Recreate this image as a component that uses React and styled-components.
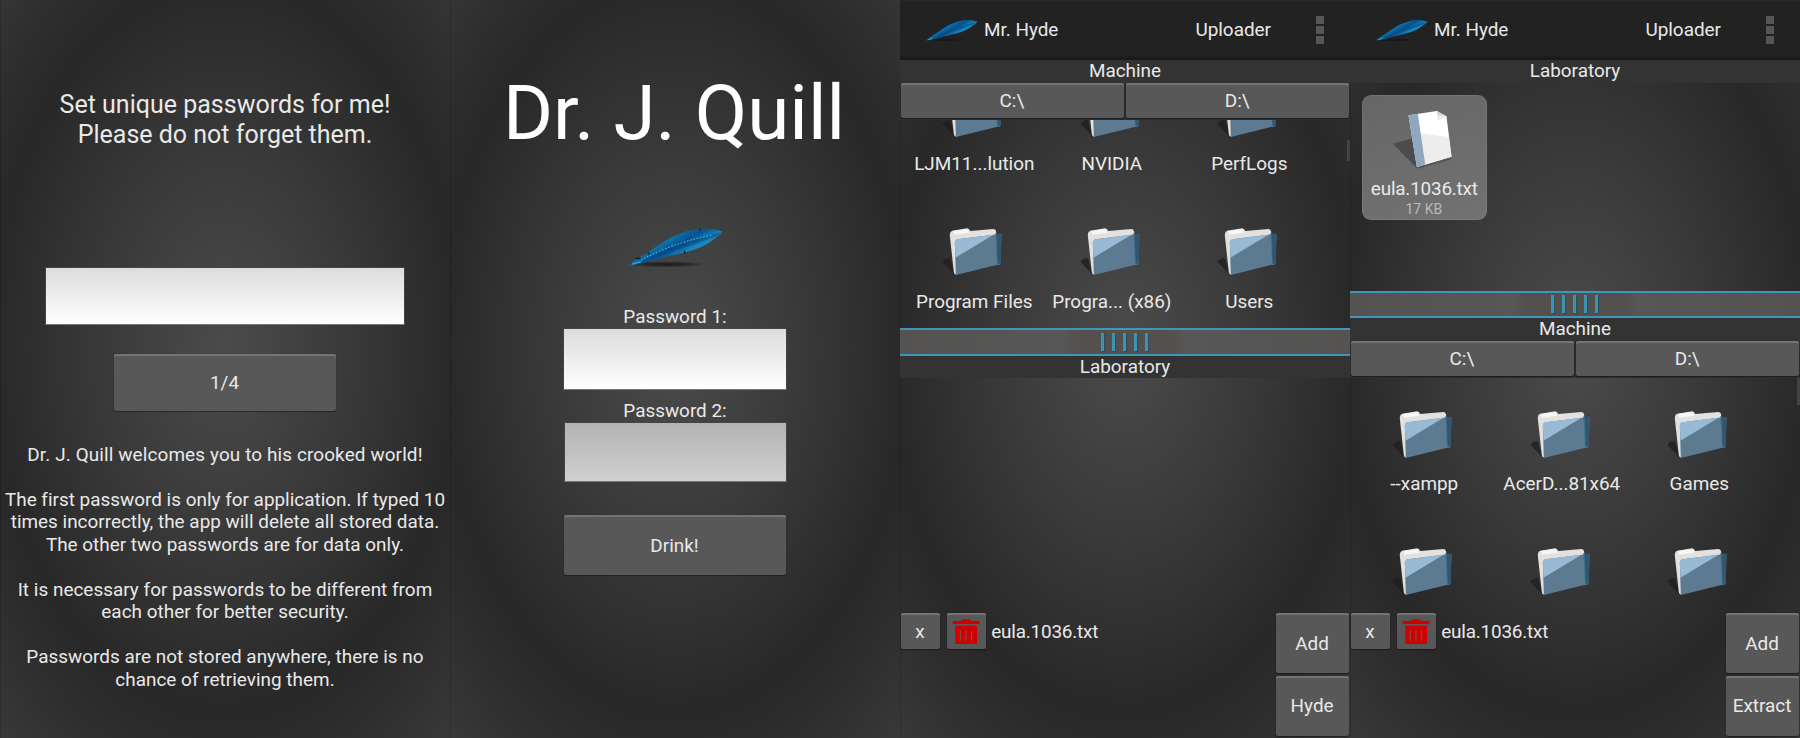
import React from "react";
import styled, { createGlobalStyle } from "styled-components";

const GlobalStyle = createGlobalStyle`
  *, *::before, *::after { box-sizing: border-box; }
  body { margin: 0; background: #2c2c2c; }
`;

const Board = styled.main`
  display: grid;
  grid-template-columns: repeat(4, 450px);
  width: 1800px;
  height: 738px;
  overflow: hidden;
  font-family: Roboto, sans-serif;
  font-size: 18.9px;
  line-height: 22.5px;
  color: #e9e9e9;
`;

const Screen = styled.section`
  display: flex;
  flex-direction: column;
  align-items: ${(p) => (p.$centered ? "center" : "stretch")};
  width: 450px;
  height: 738px;
  overflow: hidden;
  background: radial-gradient(ellipse 410px 640px at 50% 346px,
    #4b4b4b 0%, #3c3c3c 26%, #323232 42%, #282828 57%, #2d2d2d 66%, #383838 82%, #3c3c3c 100%);
  box-shadow: inset 1px 0 0 rgba(0, 0, 0, 0.14);
`;

const Heading = styled.h1`
  margin: 90px 0 0;
  font-weight: 400;
  font-size: 25px;
  line-height: 30px;
  letter-spacing: 0;
  text-align: center;
`;

const AppTitle = styled.h1`
  margin: 67px 2px 0 0;
  font-weight: 400;
  font-size: 76.4px;
  line-height: 92px;
  color: #fff;
`;

const Field = styled.input`
  width: ${(p) => p.$w}px;
  height: ${(p) => p.$h}px;
  margin-top: ${(p) => p.$mt}px;
  padding: 0 8px;
  border: 1px solid #444;
  border-bottom-color: #777;
  outline: none;
  font: inherit;
  background: ${(p) => (p.$dim ? "linear-gradient(#b3b3b3, #d0d0d0)" : "linear-gradient(#dcdcdc, #fff)")};
`;

const Button = styled.button`
  display: flex;
  align-items: center;
  justify-content: center;
  flex: none;
  width: ${(p) => p.$w}px;
  height: ${(p) => p.$h}px;
  margin-top: ${(p) => p.$mt || 0}px;
  padding: 2px 1px 0 0;
  border: 0;
  border-radius: 2px;
  background: #585858;
  box-shadow: inset 0 2px 0 #747474, 0 1px 1px rgba(0, 0, 0, 0.35), 0 0 1px rgba(0, 0, 0, 0.3);
  color: inherit;
  font: inherit;
`;

const Notes = styled.div`
  margin-top: 32.5px;
  text-align: center;
  white-space: nowrap;
`;

const Note = styled.p`
  margin: 0 0 22.5px;
  letter-spacing: ${(p) => p.$track || 0.03}px;
`;

const Label = styled.label`
  display: block;
  margin-top: ${(p) => p.$mt}px;
`;

const HeaderBar = styled.header`
  display: flex;
  align-items: center;
  flex: none;
  height: 60px;
  padding: 0 26px 0 25px;
  background: linear-gradient(#2a2a2a, #222 2px, #222 54px, #181818 60px);
`;

const AppName = styled.span`
  margin-left: 6px;
`;

const HeaderAction = styled.span`
  margin-left: auto;
`;

const Overflow = styled.span`
  display: grid;
  gap: 2px;
  margin-left: 45px;
  i { width: 8px; height: 8px; background: #565656; }
`;

const SectionTitle = styled.h2`
  flex: none;
  margin: 0;
  height: 22.5px;
  font: inherit;
  text-align: center;
  background: #333;
`;

const Drives = styled.div`
  display: flex;
  flex: none;
  gap: 2.5px;
  height: ${(p) => p.$h}px;
  padding: 0 1px;
  background: #2e2e2e;
`;

const Pane = styled.div`
  position: relative;
  flex: none;
  height: ${(p) => p.$h}px;
  overflow: hidden;
`;

const Grid = styled.div`
  display: grid;
  grid-template-columns: repeat(3, 125px);
  gap: 12.5px;
  margin: ${(p) => p.$mt}px 0 0 12.3px;
`;

const Thumb = styled.div`
  position: absolute;
  right: 0;
  top: ${(p) => p.$top}px;
  width: 3px;
  height: ${(p) => p.$h}px;
  background: #434343;
`;

const Tile = styled.figure`
  display: flex;
  flex-direction: column;
  align-items: center;
  margin: 0;
  width: 125px;
  height: 125px;
  border-radius: 9px;
  white-space: nowrap;
  background: ${(p) => (p.$selected ? "linear-gradient(160deg, #666, #727272)" : "none")};
  box-shadow: ${(p) => (p.$selected ? "inset 0 0 0 1px rgba(255,255,255,.07)" : "none")};
  svg { flex: none; }
`;

const TileName = styled.figcaption`
  margin: 2.8px 1px 0 0;
  letter-spacing: ${(p) => p.$track || 0}px;
`;

const FileSize = styled.small`
  margin: 0 2px 0 0;
  font-size: 14px;
  line-height: 18px;
  color: #b9b9b9;
`;

const Splitter = styled.div`
  display: flex;
  align-items: center;
  justify-content: center;
  gap: 8px;
  flex: none;
  height: 27.5px;
  padding-right: 2px;
  border: solid #4096b6;
  border-width: 2.5px 0;
  background: linear-gradient(90deg, #545352, #575757 36%, #53504e 40%, #53504e 60%, #575757 64%, #545352);
  i {
    width: 3px;
    height: 18px;
    background: #3c94b4;
    box-shadow: 1px 1px 1px #2b4e5c;
  }
`;

const BottomBar = styled.footer`
  display: flex;
  align-items: flex-start;
  flex: none;
  padding: 0 1px;
`;

const TrashSlot = styled.div`
  margin: 0 5.5px 0 7.5px;
`;

const PickedFile = styled.span`
  padding-top: 8px;
  letter-spacing: -0.2px;
`;

const Actions = styled.div`
  display: grid;
  gap: 2.5px;
  margin-left: auto;
`;

function Feather({ id, width, height, detail, mt = 0 }) {
  return (
    <svg width={width} height={height} viewBox="50 36 292 122" preserveAspectRatio="none" style={{ marginTop: mt, flex: "none" }} aria-hidden="true">
      <defs>
        <linearGradient id={id} x1="170" y1="65" x2="205" y2="125" gradientUnits="userSpaceOnUse">
          <stop offset="0" stopColor="#0f82b6" />
          <stop offset="0.42" stopColor="#07599a" />
          <stop offset="0.55" stopColor="#05508c" />
          <stop offset="1" stopColor="#1688c0" />
        </linearGradient>
        <radialGradient id={id + "s"}>
          <stop offset="0" stopColor="#111" stopOpacity="0.8" />
          <stop offset="0.7" stopColor="#151515" stopOpacity="0.45" />
          <stop offset="1" stopColor="#1a1a1a" stopOpacity="0" />
        </radialGradient>
      </defs>
      <ellipse cx="168" cy="147" rx="118" ry="9" fill={`url(#${id}s)`} />
      <path d="M54 151 L76 134 C100 122 122 104 150 87 C178 68 214 50 262 42 C290 39 318 42 338 50 C332 60 322 64 314 70 C288 92 256 104 215 114 C180 122 134 132 94 144 L70 148Z" fill={`url(#${id})`} />
      <path d="M92 136 C160 104 230 76 338 50 L320 64 C240 90 170 116 92 139Z" fill="#034377" opacity="0.5" />
      <path d="M66 146 L92 139" stroke="#2199c8" strokeWidth="6" />
      {detail && (
        <>
          <path d="M92 134 C150 104 220 76 308 60" fill="none" stroke="#57b5dd" strokeWidth="3" strokeDasharray="5 5" />
          <path d="M76 129 L91 130 M112 112 L118 117 M268 41 L272 46 M222 108 L226 115" stroke="#0a1f30" strokeWidth="4" />
          <path d="M150 93 L160 106 M180 76 L192 96 M212 62 L224 86 M245 52 L254 78 M280 45 L288 66 M160 120 L150 126 M200 104 L190 116 M240 92 L230 106" stroke="#2ba1d3" strokeWidth="2" opacity="0.3" />
        </>
      )}
    </svg>
  );
}

function FolderIcon() {
  return (
    <svg width="125" height="80" viewBox="37.5 23 375 240" aria-hidden="true">
      <path d="M129 185 Q132 175 151 173 L166 223Z" fill="#1e1e1e" opacity="0.75" />
      <path d="M151 106 Q150 94 158 91 L203 84 Q209 84 212 92 L282 86 Q289 86 290 94 L292 150 L172 222 Q165 225 163 216Z" fill="#e2e1e0" />
      <path d="M160 92 L203 86 L210 97 L164 103Z" fill="#f6f6f6" />
      <path d="M166 128 Q166 119 174 117 L306 100 L303 191 L169 224Z" fill="#5d7b90" />
      <path d="M166 128 Q166 119 174 117 L282 103 L168 172Z" fill="#98bad4" />
      <path d="M288 99 L306 101 L304 189 L293 193Z" fill="#33566f" />
      <path d="M288 99 Q290 100 290 108 L293 193 L302 191" fill="none" stroke="#4c80a3" strokeWidth="2" />
    </svg>
  );
}

function TextFileIcon() {
  return (
    <svg width="125" height="80" viewBox="37.5 285 375 240" aria-hidden="true">
      <path d="M130 431 L188 415 L204 506Z" fill="#474747" opacity="0.85" />
      <path d="M202 502 L306 472 L300 480 L206 506Z" fill="#555" />
      <path d="M177 346 L262 333 L291 349 L306 470 L202 501Z" fill="#fff" />
      <path d="M212 400 L298 411 L306 470 L226 494Z" fill="#ededed" />
      <path d="M177 346 L205 341 L227 493 L202 501Z" fill="#8fa7bf" />
      <path d="M262 333 L267 360 L291 349Z" fill="#d2d2d2" />
      <path d="M268 346 L267 360 L291 349Z" fill="#eee" />
    </svg>
  );
}

function TrashIcon() {
  return (
    <svg width="28" height="26" viewBox="158 87 84 78" aria-hidden="true">
      <path d="M185 92 L189 88 H211 L215 92 V95 H185Z" fill="#d00000" />
      <rect x="160" y="93" width="80" height="9" fill="#d00000" />
      <path d="M168 107 H233 V162 H168Z" fill="#d00000" />
      <path d="M183 121 V152 M200 121 V152 M217 121 V152" stroke="#785050" strokeWidth="3.5" />
    </svg>
  );
}

function Header({ id }) {
  return (
    <HeaderBar>
      <Feather id={id} width={53} height={23} />
      <AppName>Mr. Hyde</AppName>
      <HeaderAction>Uploader</HeaderAction>
      <Overflow><i /><i /><i /></Overflow>
    </HeaderBar>
  );
}

function DriveTabs({ height }) {
  return (
    <Drives $h={height}>
      <Button $w={222.8} $h={35.5}>C:\</Button>
      <Button $w={222.8} $h={35.5}>D:\</Button>
    </Drives>
  );
}

function Folders({ names, offset }) {
  return (
    <Grid $mt={offset}>
      {names.map((name) => (
        <Tile key={name}>
          <FolderIcon />
          <TileName>{name}</TileName>
        </Tile>
      ))}
    </Grid>
  );
}

function Handle() {
  return <Splitter><i /><i /><i /><i /><i /></Splitter>;
}

function Footer({ action }) {
  return (
    <BottomBar>
      <Button $w={38.8} $h={35.5}>x</Button>
      <TrashSlot>
        <Button $w={38.5} $h={35.5} aria-label="Delete"><TrashIcon /></Button>
      </TrashSlot>
      <PickedFile>eula.1036.txt</PickedFile>
      <Actions>
        <Button $w={72.8} $h={60}>Add</Button>
        <Button $w={72.8} $h={60}>{action}</Button>
      </Actions>
    </BottomBar>
  );
}

export default function App() {
  return (
    <>
      <GlobalStyle />
      <Board>
        <Screen $centered>
          <Heading>Set unique passwords for me!<br />Please do not forget them.</Heading>
          <Field $w={360} $h={58} $mt={116.5} />
          <Button $w={222} $h={57} $mt={29.5}>1/4</Button>
          <Notes>
            <Note $track={0.13}>Dr. J. Quill welcomes you to his crooked world!</Note>
            <Note $track={0.01}>The first password is only for application. If typed 10<br />times incorrectly, the app will delete all stored data.<br />The other two passwords are for data only.</Note>
            <Note>It is necessary for passwords to be different from<br />each other for better security.</Note>
            <Note>Passwords are not stored anywhere, there is no<br />chance of retrieving them.</Note>
          </Notes>
        </Screen>

        <Screen $centered>
          <AppTitle>Dr. J. Quill</AppTitle>
          <Feather id="feather-main" width={97} height={41} detail mt={68} />
          <Label $mt={38}>Password 1:</Label>
          <Field $w={224} $h={62} $mt={-0.5} />
          <Label $mt={9.5}>Password 2:</Label>
          <Field $w={223} $h={60} $mt={0} $dim />
          <Button $w={222} $h={60} $mt={33}>Drink!</Button>
        </Screen>

        <Screen>
          <Header id="feather-hyde" />
          <SectionTitle>Machine</SectionTitle>
          <DriveTabs height={37.5} />
          <Pane $h={208}>
            <Folders offset={-49.8} names={["LJM11...lution", "NVIDIA", "PerfLogs", "Program Files", "Progra... (x86)", "Users"]} />
            <Thumb $top={20} $h={21} />
          </Pane>
          <Handle />
          <SectionTitle>Laboratory</SectionTitle>
          <Pane $h={235} />
          <Footer action="Hyde" />
        </Screen>

        <Screen>
          <Header id="feather-extract" />
          <SectionTitle>Laboratory</SectionTitle>
          <Pane $h={208}>
            <Grid $mt={12.5}>
              <Tile $selected>
                <TextFileIcon />
                <TileName $track={-0.2}>eula.1036.txt</TileName>
                <FileSize>17 KB</FileSize>
              </Tile>
            </Grid>
          </Pane>
          <Handle />
          <SectionTitle>Machine</SectionTitle>
          <DriveTabs height={37.5} />
          <Pane $h={235}>
            <Folders offset={12.5} names={["--xampp", "AcerD...81x64", "Games"]} />
            <Grid $mt={12.5}>
              <Tile><FolderIcon /></Tile>
              <Tile><FolderIcon /></Tile>
              <Tile><FolderIcon /></Tile>
            </Grid>
            <Thumb $top={0} $h={27} />
          </Pane>
          <Footer action="Extract" />
        </Screen>
      </Board>
    </>
  );
}
